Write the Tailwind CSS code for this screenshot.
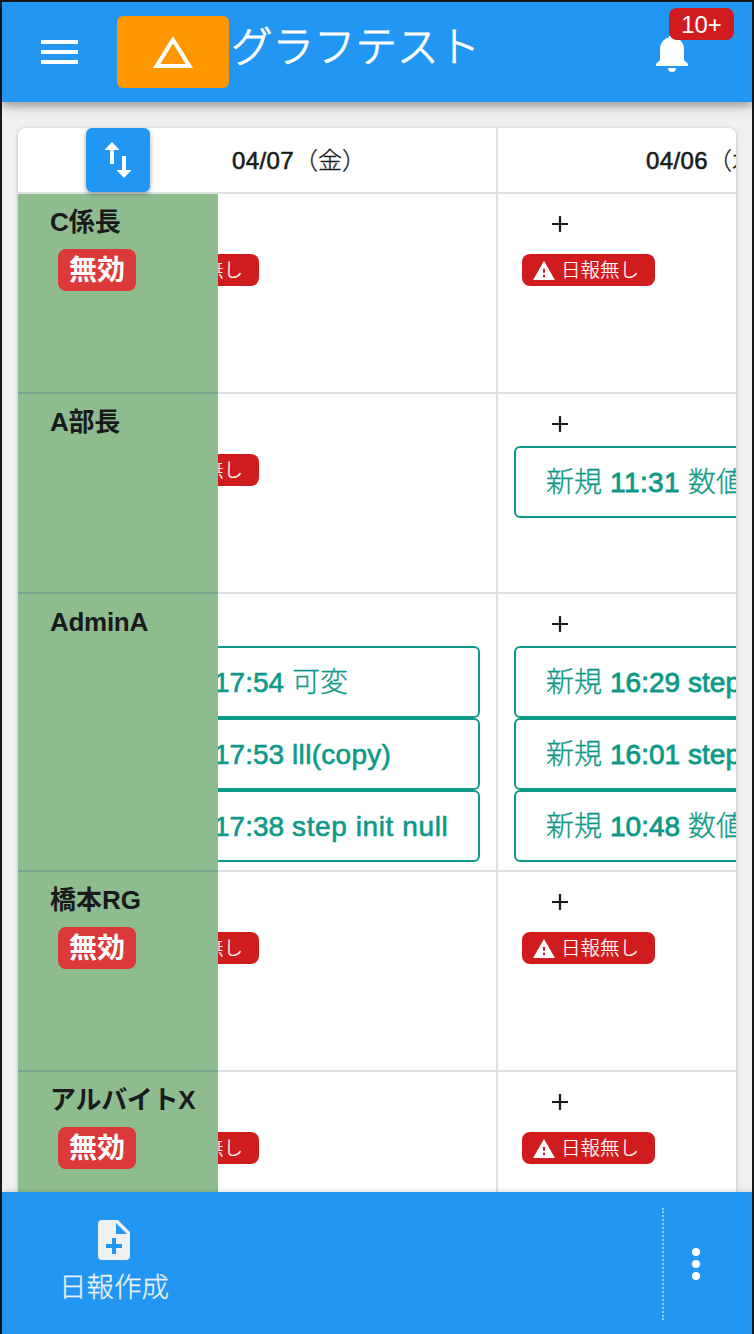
<!DOCTYPE html>
<html lang="ja">
<head>
<meta charset="utf-8">
<title>グラフテスト</title>
<script src="https://cdn.jsdelivr.net/npm/@tailwindcss/browser@4"></script>
</head>
<body class="w-[754px] h-[1334px] overflow-hidden">
<svg class="hidden"><symbol id="warn" viewBox="0 0 22 19"><path fill-rule="evenodd" d="M0 19H22L11 0zM10 16.2h2v-2.400h-2zM10 11.800h2V7.800h-2z"/></symbol></svg>
<div class="w-full h-full flex flex-col border-2 border-b-0 border-[#16181a] bg-[#eff1f1] text-[#191b1b] font-['Liberation_Sans','Noto_Sans_CJK_JP',sans-serif] whitespace-nowrap">

  <header class="relative z-10 h-[100px] shrink-0 flex items-start bg-[#2196f3] shadow-[0_4px_8px_rgba(0,0,0,.28),0_2px_16px_rgba(0,0,0,.14)] text-white">
    <div class="ml-[39px] mt-[38px] w-[37px] flex flex-col gap-1.5">
      <div class="h-1 bg-white"></div><div class="h-1 bg-white"></div><div class="h-1 bg-white"></div>
    </div>
    <div class="ml-[39px] mt-3.5 w-28 h-[72px] rounded-md bg-[#ff9800] flex justify-center pt-[20px]">
      <svg class="w-10 h-8" viewBox="0 0 40 32"><path fill="#fff" fill-rule="evenodd" d="M20 0L40 32H0zM20 7.600L7.400 28H32.600z"/></svg>
    </div>
    <h1 class="mt-[16px] ml-[2px] text-[41.500px] leading-[60px] font-light [-webkit-text-stroke:1px]">グラフテスト</h1>
    <div class="absolute right-[64px] top-[34px]">
      <svg class="w-8 h-9" viewBox="0 0 32 36"><path fill="#fff" d="M16 -2a3 3 0 0 0-3 3v.4C7.400 2.600 4 7.500 4 13v11l-4 4v2h32v-2l-4-4V13C28 7.500 24.600 2.600 19 1.400V1a3 3 0 0 0-3-3zM12 32a4 4 0 0 0 8 0z"/></svg>
    </div>
    <div class="absolute right-[18px] top-1.5 w-[65px] h-8 rounded-lg bg-[#d01c1f] text-center text-2xl leading-[33px]">10+</div>
  </header>

  <main class="flex-1 min-h-0 px-4 pt-[26px]">
    <div class="h-full rounded-t-lg shadow-[0_1px_4px_rgba(0,0,0,.25)]">
    <div class="h-full rounded-t-lg overflow-hidden bg-white flex flex-col">
      <div class="relative z-10 h-[66px] shrink-0 flex border-b-2 border-[#e0e0e0] text-2xl leading-[66px]">
        <div class="w-[200px] pl-[68px]">
          <div class="w-16 h-16 rounded-md bg-[#2196f3] shadow-[0_2px_5px_rgba(0,0,0,.35)]">
            <svg class="w-16 h-16" viewBox="0 0 64 64"><path fill="#fff" d="M26 14l7.500 8H28v14h-4V22h-5.500zM36 28h4v14h5.500L38 50l-7.500-8H36z"/></svg>
          </div>
        </div>
        <div class="w-[280px] h-[64px] border-r-2 border-[#e0e0e0] pl-[14px] overflow-hidden"><span class="tracking-[0.4px] [-webkit-text-stroke:0.6px]">04/07</span><span class="font-light [-webkit-text-stroke:0.3px]">（金）</span></div>
        <div class="flex-1 h-[64px] pl-[148px] overflow-hidden"><span class="tracking-[0.4px] [-webkit-text-stroke:0.6px]">04/06</span><span class="font-light [-webkit-text-stroke:0.3px]">（木）</span></div>
      </div>

      <!-- C係長 -->
      <div class="h-[200px] shrink-0 flex">
        <div class="w-[200px] bg-[#8fbc8f] border-b-2 border-[#73a68d] pl-8 pt-2 font-bold">
          <div class="text-[26px] leading-10">C係長</div>
          <div class="mt-[7px] ml-2 w-[78px] h-[42px] rounded-lg bg-[#dc3a3a] text-white text-[28px] leading-[44px] text-center">無効</div>
        </div>
        <div class="w-[280px] border-b-2 border-r-2 border-[#e0e0e0] overflow-hidden pt-[60px]">
          <div class="-ml-[92px] w-[133px] h-8 rounded-lg bg-[#d01c1f] text-white flex items-center pl-[11px] gap-1.5"><svg class="w-[22px] h-[19px] fill-white"><use href="#warn"/></svg><span class="text-[19.500px] leading-8 font-light [-webkit-text-stroke:0.2px]">日報無し</span></div>
        </div>
        <div class="flex-1 border-b-2 border-[#e0e0e0] overflow-hidden pl-4">
          <svg class="mt-[22px] ml-[38px] w-4 h-4" viewBox="0 0 16 16"><path stroke="#191b1b" stroke-width="2.200" d="M8 0V16M0 8H16"/></svg>
          <div class="ml-2 mt-[22px] w-[133px] h-8 rounded-lg bg-[#d01c1f] text-white flex items-center pl-[11px] gap-1.5"><svg class="w-[22px] h-[19px] fill-white"><use href="#warn"/></svg><span class="text-[19.500px] leading-8 font-light [-webkit-text-stroke:0.2px]">日報無し</span></div>
        </div>
      </div>

      <!-- A部長 -->
      <div class="h-[200px] shrink-0 flex">
        <div class="w-[200px] bg-[#8fbc8f] border-b-2 border-[#73a68d] pl-8 pt-2 font-bold">
          <div class="text-[26px] leading-10 tracking-[-0.300px]">A部長</div>
        </div>
        <div class="w-[280px] border-b-2 border-r-2 border-[#e0e0e0] overflow-hidden pt-[60px]">
          <div class="-ml-[92px] w-[133px] h-8 rounded-lg bg-[#d01c1f] text-white flex items-center pl-[11px] gap-1.5"><svg class="w-[22px] h-[19px] fill-white"><use href="#warn"/></svg><span class="text-[19.500px] leading-8 font-light [-webkit-text-stroke:0.2px]">日報無し</span></div>
        </div>
        <div class="flex-1 border-b-2 border-[#e0e0e0] overflow-hidden pl-4">
          <svg class="mt-[22px] ml-[38px] w-4 h-4" viewBox="0 0 16 16"><path stroke="#191b1b" stroke-width="2.200" d="M8 0V16M0 8H16"/></svg>
          <div class="mt-[14px] w-[364px] h-[72px] rounded-md border-2 border-[#0e9888] text-[#0e9888] pl-[30px] text-[28px] leading-[70px] flex gap-2"><span class="font-light [-webkit-text-stroke:0.3px]">新規</span><span class="tracking-[0.4px] [-webkit-text-stroke:0.8px]">11:31</span><span class="font-light [-webkit-text-stroke:0.3px]">数値</span></div>
        </div>
      </div>

      <!-- AdminA -->
      <div class="h-[278px] shrink-0 flex">
        <div class="w-[200px] bg-[#8fbc8f] border-b-2 border-[#73a68d] pl-8 pt-2 font-bold">
          <div class="text-[26px] leading-10 tracking-[-0.300px]">AdminA</div>
        </div>
        <div class="w-[280px] border-b-2 border-r-2 border-[#e0e0e0] overflow-hidden pt-[52px]">
          <div class="-ml-[104px] w-[366px] text-[#0e9888] text-[28px] leading-[70px]">
            <div class="h-[72px] rounded-md border-2 border-[#0e9888] pl-[35px] flex gap-[7px]"><span class="font-light [-webkit-text-stroke:0.3px]">新規</span><span class="[-webkit-text-stroke:0.6px]">17:54</span><span class="ml-px font-light [-webkit-text-stroke:0.3px]">可変</span></div>
            <div class="h-[72px] rounded-md border-2 border-[#0e9888] pl-[35px] flex gap-[7px]"><span class="font-light [-webkit-text-stroke:0.3px]">新規</span><span class="[-webkit-text-stroke:0.6px]">17:53</span><span class="ml-px tracking-[0.300px] [-webkit-text-stroke:0.6px]">lll(copy)</span></div>
            <div class="h-[72px] rounded-md border-2 border-[#0e9888] pl-[35px] flex gap-[7px]"><span class="font-light [-webkit-text-stroke:0.3px]">新規</span><span class="[-webkit-text-stroke:0.6px]">17:38</span><span class="ml-px tracking-[0.6px] [-webkit-text-stroke:0.6px]">step init null</span></div>
          </div>
        </div>
        <div class="flex-1 border-b-2 border-[#e0e0e0] overflow-hidden pl-4">
          <svg class="mt-[22px] ml-[38px] w-4 h-4" viewBox="0 0 16 16"><path stroke="#191b1b" stroke-width="2.200" d="M8 0V16M0 8H16"/></svg>
          <div class="mt-[14px] w-[364px] text-[#0e9888] text-[28px] leading-[70px]">
            <div class="h-[72px] rounded-md border-2 border-[#0e9888] pl-[30px] flex gap-2"><span class="font-light [-webkit-text-stroke:0.3px]">新規</span><span class="[-webkit-text-stroke:0.8px]">16:29</span><span class="[-webkit-text-stroke:0.8px]">step</span></div>
            <div class="h-[72px] rounded-md border-2 border-[#0e9888] pl-[30px] flex gap-2"><span class="font-light [-webkit-text-stroke:0.3px]">新規</span><span class="[-webkit-text-stroke:0.8px]">16:01</span><span class="[-webkit-text-stroke:0.8px]">step</span></div>
            <div class="h-[72px] rounded-md border-2 border-[#0e9888] pl-[30px] flex gap-2"><span class="font-light [-webkit-text-stroke:0.3px]">新規</span><span class="[-webkit-text-stroke:0.8px]">10:48</span><span class="font-light [-webkit-text-stroke:0.3px]">数値</span></div>
          </div>
        </div>
      </div>

      <!-- 橋本RG -->
      <div class="h-[200px] shrink-0 flex">
        <div class="w-[200px] bg-[#8fbc8f] border-b-2 border-[#73a68d] pl-8 pt-2 font-bold">
          <div class="text-[26px] leading-10">橋本RG</div>
          <div class="mt-[7px] ml-2 w-[78px] h-[42px] rounded-lg bg-[#dc3a3a] text-white text-[28px] leading-[44px] text-center">無効</div>
        </div>
        <div class="w-[280px] border-b-2 border-r-2 border-[#e0e0e0] overflow-hidden pt-[60px]">
          <div class="-ml-[92px] w-[133px] h-8 rounded-lg bg-[#d01c1f] text-white flex items-center pl-[11px] gap-1.5"><svg class="w-[22px] h-[19px] fill-white"><use href="#warn"/></svg><span class="text-[19.500px] leading-8 font-light [-webkit-text-stroke:0.2px]">日報無し</span></div>
        </div>
        <div class="flex-1 border-b-2 border-[#e0e0e0] overflow-hidden pl-4">
          <svg class="mt-[22px] ml-[38px] w-4 h-4" viewBox="0 0 16 16"><path stroke="#191b1b" stroke-width="2.200" d="M8 0V16M0 8H16"/></svg>
          <div class="ml-2 mt-[22px] w-[133px] h-8 rounded-lg bg-[#d01c1f] text-white flex items-center pl-[11px] gap-1.5"><svg class="w-[22px] h-[19px] fill-white"><use href="#warn"/></svg><span class="text-[19.500px] leading-8 font-light [-webkit-text-stroke:0.2px]">日報無し</span></div>
        </div>
      </div>

      <!-- アルバイトX -->
      <div class="h-[200px] shrink-0 flex">
        <div class="w-[200px] bg-[#8fbc8f] pl-8 pt-2 font-bold">
          <div class="text-[26px] leading-10 tracking-[-0.300px]">アルバイトX</div>
          <div class="mt-[7px] ml-2 w-[78px] h-[42px] rounded-lg bg-[#dc3a3a] text-white text-[28px] leading-[44px] text-center">無効</div>
        </div>
        <div class="w-[280px] border-r-2 border-[#e0e0e0] overflow-hidden pt-[60px]">
          <div class="-ml-[92px] w-[133px] h-8 rounded-lg bg-[#d01c1f] text-white flex items-center pl-[11px] gap-1.5"><svg class="w-[22px] h-[19px] fill-white"><use href="#warn"/></svg><span class="text-[19.500px] leading-8 font-light [-webkit-text-stroke:0.2px]">日報無し</span></div>
        </div>
        <div class="flex-1 overflow-hidden pl-4">
          <svg class="mt-[22px] ml-[38px] w-4 h-4" viewBox="0 0 16 16"><path stroke="#191b1b" stroke-width="2.200" d="M8 0V16M0 8H16"/></svg>
          <div class="ml-2 mt-[22px] w-[133px] h-8 rounded-lg bg-[#d01c1f] text-white flex items-center pl-[11px] gap-1.5"><svg class="w-[22px] h-[19px] fill-white"><use href="#warn"/></svg><span class="text-[19.500px] leading-8 font-light [-webkit-text-stroke:0.2px]">日報無し</span></div>
        </div>
      </div>
    </div>
    </div>
  </main>

  <footer class="relative z-20 h-[142px] shrink-0 bg-[#2196f3] text-[#eff1f1] flex justify-between shadow-[0_0_5px_rgba(0,0,0,.2)]">
    <div class="w-[224px] pt-7 flex flex-col items-center">
      <svg class="w-8 h-10" viewBox="0 0 32 40"><path fill="#eff1f1" fill-rule="evenodd" d="M4 0H20L32 12V36a4 4 0 0 1-4 4H4a4 4 0 0 1-4-4V4a4 4 0 0 1 4-4zM18 3V14H29zM14 18v6H8v4h6v6h4v-6h6v-4h-6v-6z"/></svg>
      <div class="mt-[8px] text-[27.500px] leading-10 font-light [-webkit-text-stroke:0.3px]">日報作成</div>
    </div>
    <div class="flex pt-4">
      <div class="h-28 border-l-2 border-dotted border-[#a3cbe4]"></div>
      <div class="ml-7 mr-[52px] pt-10 flex flex-col gap-1">
        <div class="size-2 rounded-full bg-white"></div><div class="size-2 rounded-full bg-white"></div><div class="size-2 rounded-full bg-white"></div>
      </div>
    </div>
  </footer>
</div>
</body>
</html>
